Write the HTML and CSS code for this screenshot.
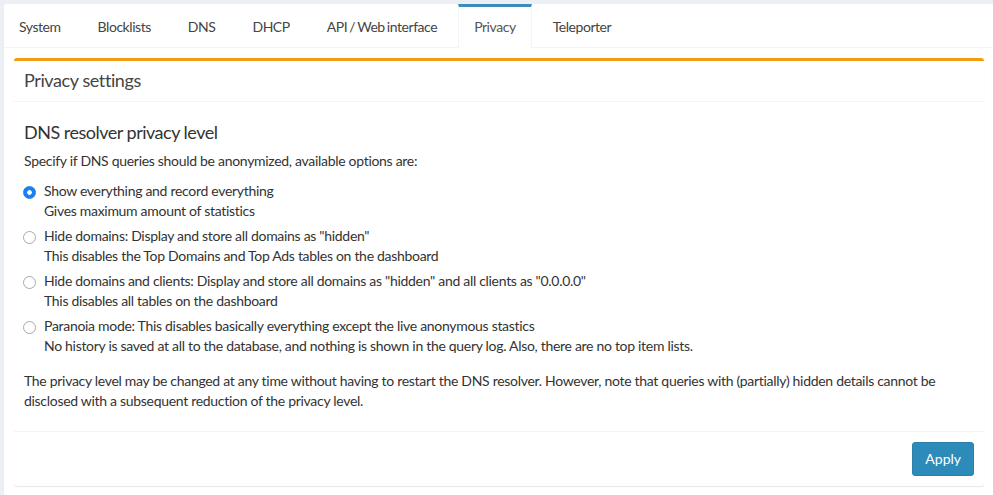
FILE: index.html
```html
<!DOCTYPE html>
<html lang="en">
<head>
<meta charset="utf-8">
<title>Settings - Privacy</title>
<link rel="stylesheet" href="styles.css">
</head>
<body>
<div class="tabs-box">
  <ul class="nav-tabs">
    <li><a href="#">System</a></li>
    <li><a href="#">Blocklists</a></li>
    <li><a href="#">DNS</a></li>
    <li><a href="#">DHCP</a></li>
    <li><a href="#">API / Web interface</a></li>
    <li class="active"><a href="#">Privacy</a></li>
    <li><a href="#">Teleporter</a></li>
  </ul>
  <div class="tab-content">
    <div class="box">
      <div class="box-header">
        <h3 class="box-title">Privacy settings</h3>
      </div>
      <div class="box-body">
        <h4 class="section-title">DNS resolver privacy level</h4>
        <p class="intro">Specify if DNS queries should be anonymized, available options are:</p>
        <div class="radio">
          <label><input type="radio" name="privacylevel" value="0" checked>Show everything and record everything<br>Gives maximum amount of statistics</label>
        </div>
        <div class="radio">
          <label><input type="radio" name="privacylevel" value="1">Hide domains: Display and store all domains as "hidden"<br>This disables the Top Domains and Top Ads tables on the dashboard</label>
        </div>
        <div class="radio">
          <label><input type="radio" name="privacylevel" value="2">Hide domains and clients: Display and store all domains as "hidden" and all clients as "0.0.0.0"<br>This disables all tables on the dashboard</label>
        </div>
        <div class="radio">
          <label><input type="radio" name="privacylevel" value="3">Paranoia mode: This disables basically everything except the live anonymous stastics<br>No history is saved at all to the database, and nothing is shown in the query log. Also, there are no top item lists.</label>
        </div>
        <p class="note">The privacy level may be changed at any time without having to restart the DNS resolver. However, note that queries with (partially) hidden details cannot be disclosed with a subsequent reduction of the privacy level.</p>
      </div>
      <div class="box-footer">
        <button type="button" class="btn-apply">Apply</button>
      </div>
    </div>
  </div>
</div>
</body>
</html>
```

FILE: styles.css
```css
html, body {
  margin: 0;
  padding: 0;
  overflow: hidden;
}

body {
  background: #ecf0f5;
  font-family: "Lato", "Open Sans", sans-serif;
  font-size: 14px;
  line-height: 20px;
  letter-spacing: -0.3px;
  color: #333;
  height: 495px;
}

.tabs-box {
  margin: 4px 0 0 4px;
  width: 990px;
  background: #fff;
  border-radius: 3px;
  box-shadow: 0 1px 1px rgba(0, 0, 0, 0.1);
}

.nav-tabs {
  list-style: none;
  margin: 0;
  padding: 0;
  display: flex;
  border-bottom: 1px solid #f4f4f4;
}

.nav-tabs li {
  margin-right: 5px;
  margin-bottom: -1px;
}

.nav-tabs a {
  display: block;
  padding: 10px 15px;
  border-top: 3px solid transparent;
  border-left: 1px solid transparent;
  border-right: 1px solid transparent;
  color: #444;
  text-decoration: none;
  line-height: 20px;
  letter-spacing: -0.45px;
  word-spacing: -1px;
}

.nav-tabs li:first-child a {
  border-left: 0;
}

.nav-tabs li.active a {
  border-top-color: #3c8dbc;
  border-left-color: #f4f4f4;
  border-right-color: #f4f4f4;
  background: #fff;
  color: #555;
  padding-bottom: 11px;
}

.tab-content {
  padding: 10px;
}

.box {
  background: #fff;
  border-top: 3px solid #f39c12;
  border-radius: 3px;
  box-shadow: 0 1px 1px rgba(0, 0, 0, 0.1);
}

.box-header {
  padding: 9px 10px 11px;
  border-bottom: 1px solid #f4f4f4;
}

.box-title {
  margin: 0;
  font-size: 18px;
  line-height: 20px;
  font-weight: 400;
  letter-spacing: -0.4px;
  color: #444;
}

.box-body {
  padding: 10px;
}

.section-title {
  margin: 10px 0 9px;
  font-size: 18px;
  line-height: 20px;
  font-weight: 400;
  letter-spacing: -0.5px;
  color: #333;
}

.intro {
  margin: 0 0 10px;
}

.radio {
  margin: 0 0 5px;
}

.radio label {
  display: block;
  position: relative;
  padding-left: 20px;
}

.radio input {
  -webkit-appearance: none;
  appearance: none;
  position: absolute;
  left: -1px;
  top: 5px;
  margin: 0;
  width: 13px;
  height: 13px;
  border: 1px solid #a9a9a9;
  border-radius: 50%;
  background: #fff;
  box-sizing: border-box;
}

.radio input:checked {
  border-color: #1a7ff5;
  background: radial-gradient(circle, #fff 0, #fff 2px, #1a7ff5 2.6px);
}

.note {
  margin: 15px 0 10px;
}

.box-footer {
  border-top: 1px solid #f4f4f4;
  padding: 10px;
  display: flex;
  justify-content: flex-end;
}

.btn-apply {
  font-family: inherit;
  font-size: 14px;
  line-height: 20px;
  letter-spacing: 0;
  padding: 6px 12px;
  color: #fff;
  background: #2d8bba;
  border: 1px solid #2a7fab;
  border-radius: 3px;
}
```
